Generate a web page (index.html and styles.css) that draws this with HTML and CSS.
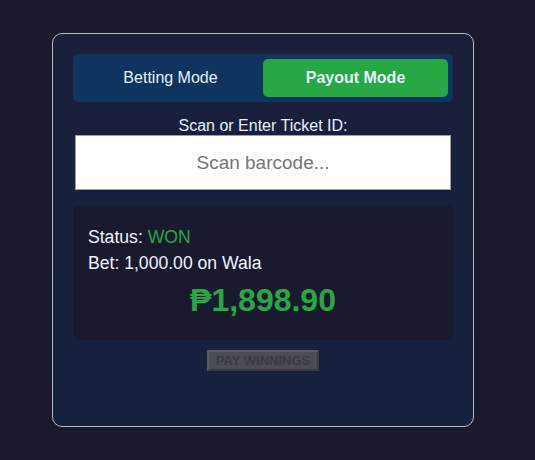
FILE: index.html
```html
<!DOCTYPE html>
<html>
<head>
<meta charset="utf-8">
<link rel="stylesheet" href="styles.css">
</head>
<body>
<div class="card">
  <div class="toggle">
    <div class="mode">Betting Mode</div>
    <div class="mode active">Payout Mode</div>
  </div>
  <label class="label" for="tid">Scan or Enter Ticket ID:</label>
  <input id="tid" class="scan" type="text" placeholder="Scan barcode...">
  <div class="result">
    <div class="line">Status: <span class="won">WON</span></div>
    <div class="line">Bet: 1,000.00 on Wala</div>
    <div class="amount">₱1,898.90</div>
  </div>
  <div class="actions"><button class="pay" disabled>PAY WINNINGS</button></div>
</div>
</body>
</html>
```
FILE: styles.css
```css
html, body { margin: 0; padding: 0; }
body {
  background: #1a1a2e;
  font-family: "Liberation Sans", Arial, sans-serif;
  color: #e6f1ff;
  width: 535px;
  height: 460px;
  padding-top: 33px;
  box-sizing: border-box;
}
.card {
  margin-left: 52px;
  width: 422px;
  height: 394px;
  box-sizing: border-box;
  border: 1px solid #b8bcc4;
  border-radius: 10px;
  background: linear-gradient(180deg, #1a1f3a 0%, #16213e 100%);
  padding: 20px;
  display: flex;
  flex-direction: column;
}
.toggle {
  background: #0f3460;
  border-radius: 5px;
  padding: 5px;
  display: flex;
  height: 48px;
  box-sizing: border-box;
}
.mode {
  flex: 1;
  display: flex;
  align-items: center;
  justify-content: center;
  font-size: 16px;
  color: #e6f1ff;
  border-radius: 5px;
}
.mode.active {
  background: #28a745;
  font-weight: bold;
}
.label {
  display: block;
  text-align: center;
  font-size: 16px;
  margin-top: 15px;
  line-height: 18px;
  color: #e6f1ff;
}
.scan {
  margin: 0 2px;
  height: 55px;
  box-sizing: border-box;
  border: 1px solid #9aa0a8;
  background: #fff;
  font-family: "Liberation Sans", Arial, sans-serif;
  font-size: 19px;
  text-align: center;
  color: #333;
  outline: none;
}
.scan::placeholder { color: #757575; }
.result {
  margin-top: 16px;
  background: #1a1a2e;
  border-radius: 5px;
  padding: 18px 15px 22px;
  height: 134px;
  box-sizing: border-box;
}
.line {
  font-size: 17.6px;
  line-height: 26px;
  color: #f0f4ff;
}
.won { color: #28a745; }
.amount {
  text-align: center;
  font-size: 32px;
  font-weight: bold;
  color: #28a745;
  margin-top: 4px;
  line-height: 40px;
}
.actions {
  display: flex;
  justify-content: center;
  margin-top: 10px;
}
.pay {
  font-family: "Liberation Sans", Arial, sans-serif;
  font-size: 13px;
  font-weight: bold;
  width: 112px;
  height: 21px;
  padding: 0;
  background: #4b4d55;
  color: #3a3c44;
  border: 2px solid;
  border-color: #5a5c63 #3a3c42 #3a3c42 #5a5c63;
}
```
